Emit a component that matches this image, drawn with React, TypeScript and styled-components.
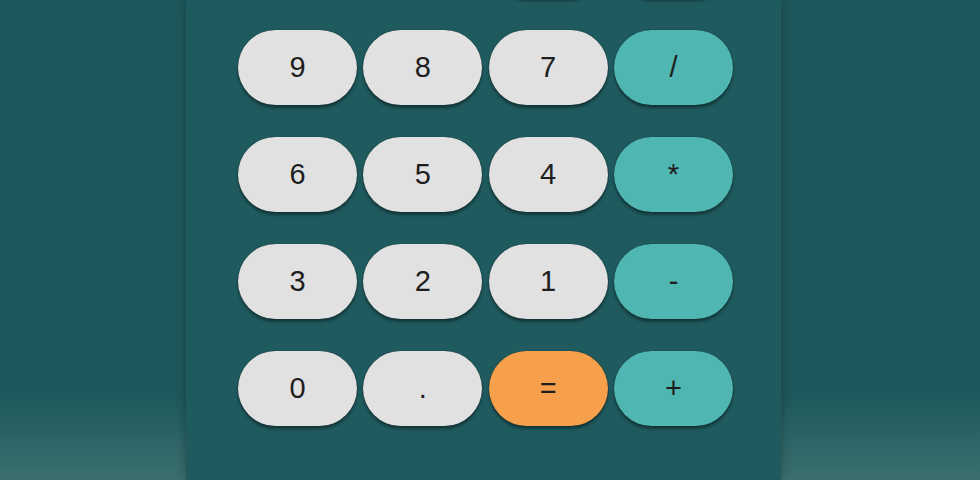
import React from "react";
import styled, { createGlobalStyle } from "styled-components";

const GlobalStyle = createGlobalStyle`
  html, body {
    margin: 0;
    padding: 0;
    height: 480px;
    overflow: hidden;
  }
  body {
    background: linear-gradient(to bottom, #1e585c 0px, #1e585c 395px, #3b6f6f 480px);
    font-family: "Liberation Sans", Arial, sans-serif;
  }
`;

const Page = styled.div`
  height: 480px;
  display: flex;
  align-items: flex-start;
  padding-left: 186px;
`;

const Panel = styled.div`
  width: 595px;
  height: 480px;
  box-sizing: border-box;
  background: #1f5a5e;
  box-shadow: 0 0 10px rgba(0, 0, 0, 0.28);
  padding: 0 49px 0 52px;
`;

const Keys = styled.div`
  display: grid;
  grid-template-columns: repeat(4, 119px);
  grid-auto-rows: 75px;
  column-gap: 6.33px;
  row-gap: 32px;
  margin-top: -77px;
`;

type Tone = "light" | "teal" | "orange";

const toneBg: Record<Tone, string> = {
  light: "#e1e1e1",
  teal: "#4fb6b1",
  orange: "#f6a04b",
};

const Key = styled.button<{ $tone: Tone }>`
  border: none;
  border-radius: 38px;
  background: ${(p) => toneBg[p.$tone]};
  color: #1e1e1e;
  font-family: "Liberation Sans", Arial, sans-serif;
  font-size: 29px;
  line-height: 1;
  padding: 0;
  display: flex;
  align-items: center;
  justify-content: center;
  box-shadow: 0 0 1px rgba(0, 0, 0, 0.6), 0 3px 3px rgba(0, 0, 0, 0.38);
  cursor: pointer;
`;

const Spacer = styled.div`
  grid-column: span 2;
`;

const rows: { label: string; tone: Tone }[][] = [
  [
    { label: "9", tone: "light" },
    { label: "8", tone: "light" },
    { label: "7", tone: "light" },
    { label: "/", tone: "teal" },
  ],
  [
    { label: "6", tone: "light" },
    { label: "5", tone: "light" },
    { label: "4", tone: "light" },
    { label: "*", tone: "teal" },
  ],
  [
    { label: "3", tone: "light" },
    { label: "2", tone: "light" },
    { label: "1", tone: "light" },
    { label: "-", tone: "teal" },
  ],
  [
    { label: "0", tone: "light" },
    { label: ".", tone: "light" },
    { label: "=", tone: "orange" },
    { label: "+", tone: "teal" },
  ],
];

export default function App() {
  return (
    <>
      <GlobalStyle />
      <Page>
        <Panel>
          <Keys>
            <Spacer />
            <Key $tone="teal" aria-label="clear" />
            <Key $tone="teal" aria-label="delete" />
            {rows.flat().map((k, i) => (
              <Key key={i} $tone={k.tone}>
                {k.label}
              </Key>
            ))}
          </Keys>
        </Panel>
      </Page>
    </>
  );
}
